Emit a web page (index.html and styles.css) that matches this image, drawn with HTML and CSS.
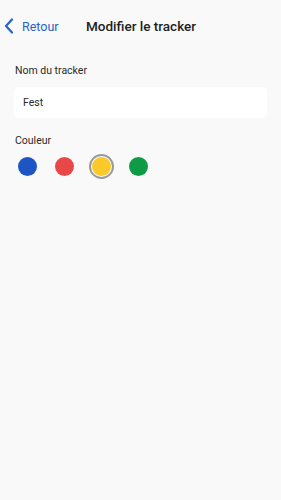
FILE: index.html
```html
<!DOCTYPE html>
<html lang="fr">
<head>
<meta charset="utf-8">
<link rel="stylesheet" href="styles.css">
</head>
<body>
<div class="screen">
  <header class="nav">
    <button class="back">
      <svg class="chev" width="10" height="16" viewBox="0 0 10 16"><path d="M8 1.5 L2 8 L8 14.5" fill="none" stroke="#2563c9" stroke-width="2.2" stroke-linecap="round" stroke-linejoin="round"/></svg>
      <span>Retour</span>
    </button>
    <h1 class="title">Modifier le tracker</h1>
  </header>
  <main class="form">
    <label class="label">Nom du tracker</label>
    <div class="input">Fest</div>
    <label class="label label-color">Couleur</label>
    <div class="swatches">
      <span class="swatch"><span class="dot blue"></span></span>
      <span class="swatch"><span class="dot red"></span></span>
      <span class="swatch selected"><span class="dot yellow"></span></span>
      <span class="swatch"><span class="dot green"></span></span>
    </div>
  </main>
</div>
</body>
</html>
```
FILE: styles.css
```css
html, body {
  margin: 0;
  padding: 0;
  background: #f9f9f9;
}
body {
  font-family: Roboto, "Liberation Sans", sans-serif;
  color: #1f1f1f;
}
.screen {
  width: 281px;
  height: 500px;
  background: #f9f9f9;
}
.nav {
  display: flex;
  align-items: center;
  height: 26px;
  padding-top: 13px;
}
.back {
  display: flex;
  align-items: center;
  gap: 8px;
  background: none;
  border: 0;
  padding: 0 0 0 4px;
  font: inherit;
  font-size: 12.5px;
  color: #2563c9;
  width: 86px;
}
.chev { display: block; }
.title {
  margin: 0;
  font-size: 13.5px;
  font-weight: 500;
  color: #222;
}
.form {
  padding: 0 14px;
  display: flex;
  flex-direction: column;
}
.label {
  font-size: 10.5px;
  color: #2a2a2a;
  margin-top: 25px;
  margin-left: 1px;
  line-height: 14px;
}
.input {
  margin-top: 9px;
  height: 31px;
  background: #ffffff;
  border-radius: 5px;
  display: flex;
  align-items: center;
  padding-left: 9px;
  font-size: 10.5px;
  color: #2a2a2a;
}
.label-color { margin-top: 16px; }
.swatches {
  display: flex;
  gap: 12px;
  margin-top: 6px;
  margin-left: 1px;
}
.swatch {
  width: 25px;
  height: 25px;
  border-radius: 50%;
  display: flex;
  align-items: center;
  justify-content: center;
  box-sizing: border-box;
}
.swatch.selected {
  border: 2px solid #9a9a9a;
}
.dot {
  width: 19px;
  height: 19px;
  border-radius: 50%;
  display: block;
}
.blue { background: #1e54c4; }
.red { background: #e94848; }
.yellow { background: #fcc92a; }
.green { background: #0f9a46; }
```
